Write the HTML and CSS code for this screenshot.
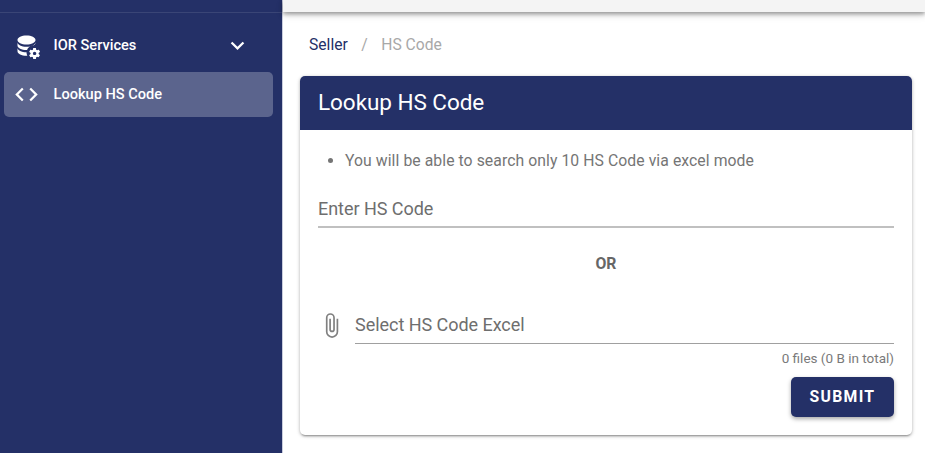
FILE: index.html
```
<!DOCTYPE html>
<html lang="en">
<head>
<meta charset="utf-8">
<title>Lookup HS Code</title>
<link rel="stylesheet" href="styles.css">
</head>
<body>
<div class="app">
  <nav class="sidebar">
    <div class="sidebar-top"></div>
    <a class="nav-item">
      <svg class="icon" viewBox="0 0 24 24"><path d="M12 3C7.580 3 4 4.790 4 7s3.580 4 8 4 8-1.790 8-4-3.580-4-8-4zM4 9v3c0 2.210 3.580 4 8 4h.5c.7-2 2.600-3.700 5.500-3.900 1.300-.7 2-1.400 2-2.100V9c0 2.210-3.580 4-8 4S4 11.210 4 9zM4 14v3c0 2.210 3.580 4 8 4h.7a7 7 0 0 1-.7-3c-4.420 0-8-1.790-8-4z"/><path class="cog" d="M23.800 20.400c.1 0 .1.100.1.200l-1 1.700c-.1.100-.2.100-.3.100l-1.200-.4c-.3.200-.5.300-.8.500l-.2 1.300c0 .1-.1.200-.2.200h-2c-.1 0-.2-.1-.3-.2l-.2-1.300c-.3-.1-.6-.3-.8-.5l-1.200.5c-.1 0-.2 0-.3-.1l-1-1.700c-.1-.1 0-.2.100-.3l1.100-.8v-1l-1.100-.8c-.1-.1-.1-.2-.1-.3l1-1.700c.1-.1.200-.1.300-.1l1.200.5c.3-.2.500-.3.800-.5l.2-1.300c0-.1.100-.2.300-.2h2c.1 0 .2.100.2.200l.2 1.300c.3.100.6.300.9.500l1.200-.5c.1 0 .3 0 .3.100l1 1.700c.1.100 0 .2-.1.300l-1.100.8v1l1 .8zM20.700 19c0-.8-.7-1.500-1.500-1.500s-1.500.7-1.500 1.500.7 1.500 1.500 1.500 1.500-.7 1.500-1.500z"/></svg>
      <span class="nav-label">IOR Services</span>
      <svg class="icon chevron" viewBox="0 0 24 24"><path d="M7.410 8.580L12 13.170l4.590-4.590L18 10l-6 6-6-6 1.410-1.420z"/></svg>
    </a>
    <a class="nav-item active">
      <svg class="icon" viewBox="0 0 24 24"><path d="M14.600 16.600l4.600-4.600-4.600-4.600L16 6l6 6-6 6-1.400-1.400zM9.400 16.600L4.800 12l4.600-4.600L8 6l-6 6 6 6 1.400-1.400z"/></svg>
      <span class="nav-label">Lookup HS Code</span>
    </a>
  </nav>
  <main class="main">
    <header class="appbar"></header>
    <div class="breadcrumbs"><a>Seller</a><span class="divider">/</span><span class="current">HS Code</span></div>
    <section class="card">
      <h1 class="card-title">Lookup HS Code</h1>
      <div class="card-body">
        <ul class="notes"><li>You will be able to search only 10 HS Code via excel mode</li></ul>
        <div class="field code-field"><label>Enter HS Code</label></div>
        <div class="or">OR</div>
        <div class="file-row">
          <svg class="icon clip" viewBox="0 0 24 24"><path d="M16.500 6v11.500a4 4 0 0 1-8 0V5a2.500 2.500 0 0 1 5 0v10.500a1 1 0 0 1-2 0V6H10v9.500a2.500 2.500 0 0 0 5 0V5a4 4 0 0 0-8 0v12.500a5.500 5.500 0 0 0 11 0V6h-1.500z"/></svg>
          <div class="field file-field"><label>Select HS Code Excel</label></div>
        </div>
        <div class="counter">0 files (0 B in total)</div>
        <button class="submit">SUBMIT</button>
      </div>
    </section>
  </main>
</div>
</body>
</html>
```
FILE: styles.css
```
* { box-sizing: border-box; }
body { margin: 0; font-family: Roboto, "Liberation Sans", sans-serif; background: #fff; overflow: hidden; }
.app { display: flex; height: 453px; }
.sidebar { width: 282px; flex: none; background: #243067; color: #fff; }
.sidebar-top { height: 13px; border-bottom: 1px solid #3a4576; margin-bottom: 10px; }
.nav-item { display: flex; align-items: center; height: 45px; margin: 0 9px 4px 4px; padding: 0 22px 1px 8.500px; border-radius: 5px; }
.nav-item.active { background: #5b648d; }
.icon { width: 27px; height: 27px; flex: none; fill: currentColor; }
.nav-label { flex: 1; margin-left: 14px; font-size: 14.600px; font-weight: 500; line-height: 22px; white-space: nowrap; }
.main { flex: 1; min-width: 0; border-left: 1px solid #c9cddd; }
.appbar { height: 12px; background: #f4f4f4; box-shadow: 0 2px 4px rgba(0,0,0,.36), 0 3px 8px rgba(0,0,0,.12); }
.breadcrumbs { display: flex; align-items: center; height: 64px; padding-left: 26px; font-size: 15.650px; color: #243067; }
.divider { width: 33.500px; text-align: center; color: #a8a8a8; }
.current { color: #a8a8a8; }
.card { width: 612px; height: 359px; margin-left: 17px; border-radius: 5px; background: #fff; box-shadow: 0 3px 2px -2px rgba(0,0,0,.25), 0 1px 3px rgba(0,0,0,.25), 0 1px 5px rgba(0,0,0,.1); }
.card-title { height: 54px; margin: 0; padding: 0 18px; border-radius: 5px 5px 0 0; background: #243067; color: #fff; font-size: 22.500px; line-height: 53px; font-weight: 400; letter-spacing: -.05px; }
.card-body { display: flex; flex-direction: column; padding: 18px 18px 0; color: #666; }
.notes { margin: 0; padding-left: 27px; font-size: 15.750px; line-height: 25px; letter-spacing: .07px; color: #757575; }
.field { border-bottom: 1px solid #a0a0a0; font-size: 18px; letter-spacing: -.04px; color: #6e6e6e; }
.code-field { height: 55px; line-height: 23px; padding-top: 24px; border-bottom: 2px solid #c0c0c0; }
.or { margin-top: 23px; text-align: center; font-size: 15.750px; line-height: 25px; font-weight: 700; }
.file-row { display: flex; margin-top: 36px; color: #808080; }
.clip { margin-right: 10px; margin-left: -.5px; margin-right: 10.500px; }
.file-field { flex: 1; height: 32px; line-height: 26px; }
.counter { height: 33px; padding-top: 5px; text-align: right; font-size: 13.500px; line-height: 18px; color: #7a7a7a; }
.submit { align-self: flex-end; width: 103px; height: 40px; padding: 0; border: 0; border-radius: 5px; background: #243067; color: #fff; font: 700 15.750px/40px Roboto, sans-serif; letter-spacing: 1.300px; box-shadow: 0 2px 4px rgba(0,0,0,.35); }
```
